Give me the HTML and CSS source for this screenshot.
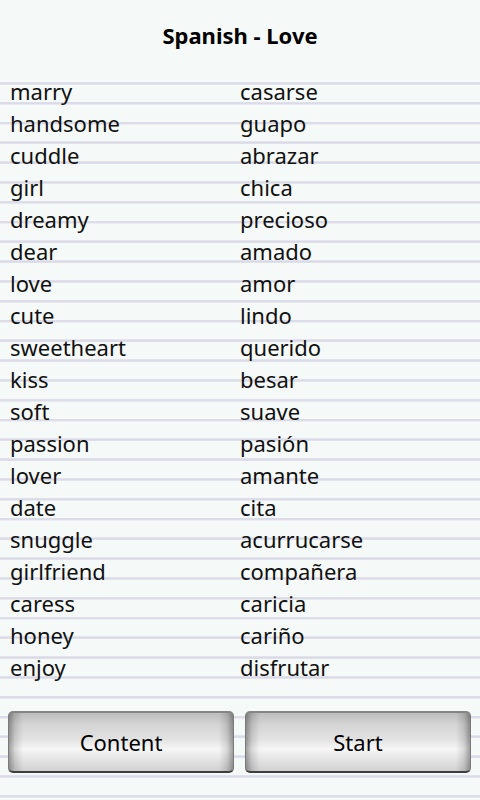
FILE: index.html
```html
<!DOCTYPE html>
<html>
<head>
<meta charset="utf-8">
<link rel="stylesheet" href="styles.css">
</head>
<body>
<div class="screen">
  <header class="title">Spanish - Love</header>
  <main class="paper">
    <div class="list">
      <div class="row"><span>marry</span><span>casarse</span></div>
      <div class="row"><span>handsome</span><span>guapo</span></div>
      <div class="row"><span>cuddle</span><span>abrazar</span></div>
      <div class="row"><span>girl</span><span>chica</span></div>
      <div class="row"><span>dreamy</span><span>precioso</span></div>
      <div class="row"><span>dear</span><span>amado</span></div>
      <div class="row"><span>love</span><span>amor</span></div>
      <div class="row"><span>cute</span><span>lindo</span></div>
      <div class="row"><span>sweetheart</span><span>querido</span></div>
      <div class="row"><span>kiss</span><span>besar</span></div>
      <div class="row"><span>soft</span><span>suave</span></div>
      <div class="row"><span>passion</span><span>pasión</span></div>
      <div class="row"><span>lover</span><span>amante</span></div>
      <div class="row"><span>date</span><span>cita</span></div>
      <div class="row"><span>snuggle</span><span>acurrucarse</span></div>
      <div class="row"><span>girlfriend</span><span>compañera</span></div>
      <div class="row"><span>caress</span><span>caricia</span></div>
      <div class="row"><span>honey</span><span>cariño</span></div>
      <div class="row"><span>enjoy</span><span>disfrutar</span></div>
    </div>
    <div class="buttons">
      <button class="btn">Content</button>
      <button class="btn">Start</button>
    </div>
  </main>
</div>
</body>
</html>
```

FILE: styles.css
```css
html, body {
  margin: 0;
  padding: 0;
  background: #f5f9f7;
}
.screen {
  width: 480px;
  height: 800px;
  display: flex;
  flex-direction: column;
  font-family: "Noto Sans", "Open Sans", sans-serif;
  color: #111;
  overflow: hidden;
}
.title {
  height: 75px;
  flex: none;
  display: flex;
  align-items: center;
  justify-content: center;
  font-weight: bold;
  font-size: 22px;
  color: #000;
  padding-bottom: 6px;
  box-sizing: border-box;
}
.paper {
  flex: 1;
  display: flex;
  flex-direction: column;
  background-image: repeating-linear-gradient(to bottom,
    transparent 0px, transparent 7px,
    #e6e6f0 7px, #d9d9e7 8.2px, #e0e0eb 9.3px, #eeeef4 10px,
    transparent 10px, transparent 19.8px);
}
.list {
  display: flex;
  flex-direction: column;
}
.row {
  height: 32px;
  display: grid;
  grid-template-columns: 230px 1fr;
  padding-left: 10px;
  align-items: center;
  font-size: 22px;
  line-height: 32px;
  color: #111;
}
.buttons {
  margin-top: 28px;
  display: flex;
  gap: 11px;
  padding: 0 9px 0 8px;
}
.btn {
  flex: 1;
  height: 62px;
  font-family: "Noto Sans", "Open Sans", sans-serif;
  font-size: 22px;
  color: #000;
  border: 1px solid #7a7a7a;
  border-top: 2px solid #858585;
  border-bottom: 2px solid #3e3e3e;
  border-radius: 5px;
  background:
    linear-gradient(to right, rgba(0,0,0,0.35) 0px, rgba(0,0,0,0.12) 6px, rgba(0,0,0,0) 14px, rgba(0,0,0,0) calc(100% - 14px), rgba(0,0,0,0.12) calc(100% - 6px), rgba(0,0,0,0.35) 100%),
    linear-gradient(to bottom, #bdbdbd 0%, #d4d4d4 20%, #e2e2e2 45%, #f6f6f6 62%, #e4e4e4 80%, #d0d0d0 100%);
  padding: 0;
}
```
